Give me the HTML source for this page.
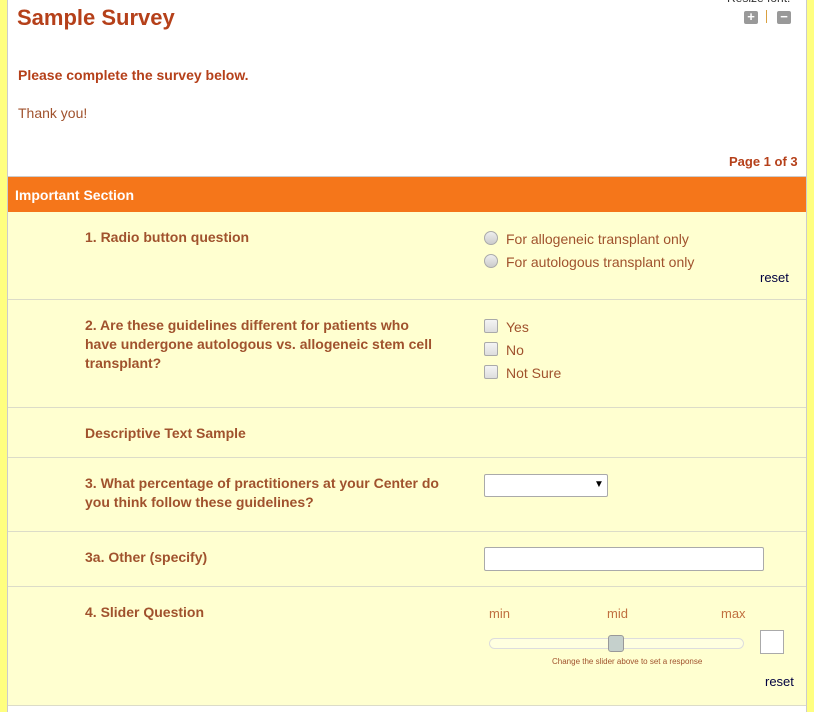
<!DOCTYPE html>
<html><head><meta charset="utf-8"><style>
*{margin:0;padding:0;box-sizing:border-box}
body{width:814px;height:712px;overflow:hidden;background:#ffff80;font-family:"Liberation Sans",sans-serif;position:relative}
.a{position:absolute;white-space:nowrap}
#main{position:absolute;left:7px;top:0;width:800px;height:712px;background:#fff;border-left:1px solid #ccc;border-right:1px solid #ccc}
.q{color:#a0522d;font-weight:bold;font-size:14px;line-height:19px}
.o{color:#a0522d;font-size:14px}
.row{position:absolute;left:8px;width:798px;background:#ffffd0;border-bottom:1px solid #dcdcc8}
.rad{position:absolute;width:14px;height:14px;border-radius:50%;background:linear-gradient(#eee,#ccc);border:1px solid #aaa}
.chk{position:absolute;width:14px;height:14px;border-radius:2px;background:linear-gradient(#f4f4f4,#ddd);border:1px solid #aaa}
</style></head><body>
<div id="main"></div>
<div class="a" style="left:727px;top:-9px;font-size:12px;color:#333">Resize font:</div>
<div class="a" style="left:744px;top:11px;width:14px;height:13px;background:#999;border-radius:2px;color:#fff;font-size:13px;line-height:12px;text-align:center;font-weight:bold">+</div>
<div class="a" style="left:766px;top:10px;width:1px;height:13px;background:#d9a040"></div>
<div class="a" style="left:777px;top:11px;width:14px;height:13px;background:#999;border-radius:2px;color:#fff;font-size:13px;line-height:12px;text-align:center;font-weight:bold">−</div>
<div class="a" style="left:17px;top:5px;font-size:22px;font-weight:bold;color:#b5401a">Sample Survey</div>
<div class="a" style="left:18px;top:67px;font-size:14px;font-weight:bold;color:#b5401a">Please complete the survey below.</div>
<div class="a" style="left:18px;top:105px;font-size:14px;color:#a0522d">Thank you!</div>
<div class="a" style="left:729px;top:154px;font-size:13px;font-weight:bold;color:#b5401a">Page 1 of 3</div>
<div class="a" style="left:8px;top:176px;width:798px;height:36px;background:#f5761a;border-top:1px solid #ccc;color:#fff;font-weight:bold;font-size:14px;padding:10px 0 0 7px">Important Section</div>

<div class="row" style="top:212px;height:88px"></div>
<div class="a q" style="left:85px;top:228px">1. Radio button question</div>
<div class="rad" style="left:484px;top:231px"></div><div class="a o" style="left:506px;top:231px">For allogeneic transplant only</div>
<div class="rad" style="left:484px;top:254px"></div><div class="a o" style="left:506px;top:254px">For autologous transplant only</div>
<div class="a" style="left:760px;top:270px;font-size:13px;color:#000040">reset</div>

<div class="row" style="top:300px;height:108px"></div>
<div class="a q" style="left:85px;top:316px">2. Are these guidelines different for patients who<br>have undergone autologous vs. allogeneic stem cell<br>transplant?</div>
<div class="chk" style="left:484px;top:319px"></div><div class="a o" style="left:506px;top:319px">Yes</div>
<div class="chk" style="left:484px;top:342px"></div><div class="a o" style="left:506px;top:342px">No</div>
<div class="chk" style="left:484px;top:365px"></div><div class="a o" style="left:506px;top:365px">Not Sure</div>

<div class="row" style="top:408px;height:50px"></div>
<div class="a q" style="left:85px;top:424px">Descriptive Text Sample</div>

<div class="row" style="top:458px;height:74px"></div>
<div class="a q" style="left:85px;top:474px">3. What percentage of practitioners at your Center do<br>you think follow these guidelines?</div>
<div class="a" style="left:484px;top:474px;width:124px;height:23px;background:#fff;border:1px solid #aaa;border-radius:2px;font-size:10px;padding:4px 0 0 109px">▼</div>

<div class="row" style="top:532px;height:55px"></div>
<div class="a q" style="left:85px;top:548px">3a. Other (specify)</div>
<div class="a" style="left:484px;top:547px;width:280px;height:24px;background:#fff;border:1px solid #aaa;border-radius:2px"></div>

<div class="row" style="top:587px;height:119px"></div>
<div class="a q" style="left:85px;top:603px">4. Slider Question</div>
<div class="a" style="left:489px;top:606px;font-size:13px;color:#c07040">min</div>
<div class="a" style="left:607px;top:606px;font-size:13px;color:#c07040">mid</div>
<div class="a" style="left:721px;top:606px;font-size:13px;color:#c07040">max</div>
<div class="a" style="left:489px;top:638px;width:255px;height:11px;background:#ffffe0;border:1px solid #ddd;border-radius:6px"></div>
<div class="a" style="left:608px;top:635px;width:16px;height:17px;background:#c5d0cc;border:1px solid #999;border-radius:3px"></div>
<div class="a" style="left:760px;top:630px;width:24px;height:24px;background:#fff;border:1px solid #aaa"></div>
<div class="a" style="left:552px;top:657px;font-size:8px;color:#a0522d">Change the slider above to set a response</div>
<div class="a" style="left:765px;top:674px;font-size:13px;color:#000040">reset</div>
</body></html>
